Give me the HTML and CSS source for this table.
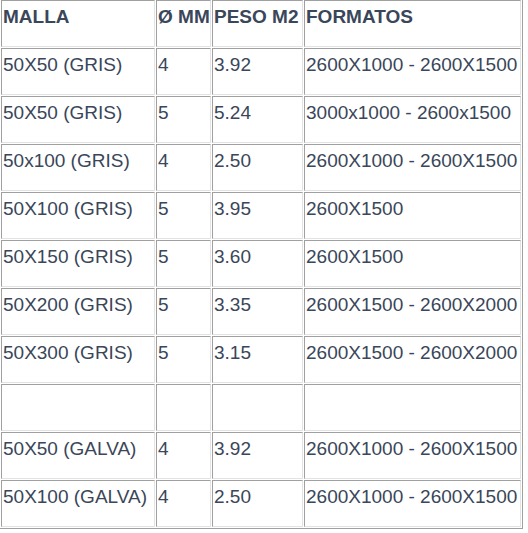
FILE: index.html
```html
<!DOCTYPE html>
<html>
<head>
<meta charset="utf-8">
<link rel="stylesheet" href="styles.css">
</head>
<body>
<table class="grid">
  <tr class="head">
    <td class="c1">MALLA</td>
    <td class="c2">Ø MM</td>
    <td class="c3">PESO M2</td>
    <td class="c4">FORMATOS</td>
  </tr>
  <tr><td>50X50 (GRIS)</td><td>4</td><td>3.92</td><td>2600X1000 - 2600X1500</td></tr>
  <tr><td>50X50 (GRIS)</td><td>5</td><td>5.24</td><td>3000x1000 - 2600x1500</td></tr>
  <tr><td>50x100 (GRIS)</td><td>4</td><td>2.50</td><td>2600X1000 - 2600X1500</td></tr>
  <tr><td>50X100 (GRIS)</td><td>5</td><td>3.95</td><td>2600X1500</td></tr>
  <tr><td>50X150 (GRIS)</td><td>5</td><td>3.60</td><td>2600X1500</td></tr>
  <tr><td>50X200 (GRIS)</td><td>5</td><td>3.35</td><td>2600X1500 - 2600X2000</td></tr>
  <tr><td>50X300 (GRIS)</td><td>5</td><td>3.15</td><td>2600X1500 - 2600X2000</td></tr>
  <tr><td></td><td></td><td></td><td></td></tr>
  <tr><td>50X50 (GALVA)</td><td>4</td><td>3.92</td><td>2600X1000 - 2600X1500</td></tr>
  <tr><td>50X100 (GALVA)</td><td>4</td><td>2.50</td><td>2600X1000 - 2600X1500</td></tr>
</table>
</body>
</html>
```
FILE: styles.css
```css
html, body {
  margin: 0;
  padding: 0;
  background: #ffffff;
}

.grid {
  margin: -2px 0 0 -1px;
  width: 524px;
  table-layout: fixed;
  border-collapse: separate;
  border-spacing: 1px;
  border: 1px solid;
  border-color: #e8e8e8 #a0a0a0 #a0a0a0 #e8e8e8;
  font-family: "Liberation Sans", Arial, sans-serif;
  font-size: 19px;
  line-height: 22px;
  color: #3a4659;
}

.grid td {
  box-sizing: border-box;
  height: 47px;
  padding: 5px 1px 0 1px;
  vertical-align: top;
  white-space: nowrap;
  overflow: hidden;
  border: 1px solid;
  border-color: #a0a0a0 #e3e3e3 #e3e3e3 #a0a0a0;
}

.head td {
  font-weight: bold;
}

.c1 { width: 154px; }
.c2 { width: 55px; }
.c3 { width: 91px; }
.c4 { width: 217px; }
```
